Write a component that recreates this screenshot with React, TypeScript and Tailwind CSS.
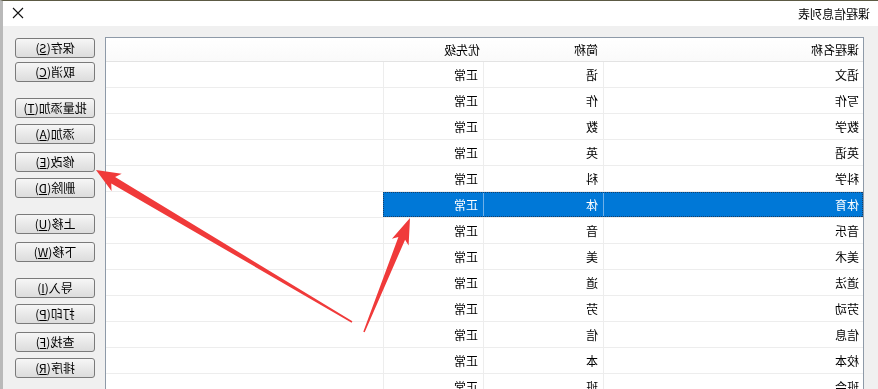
const COURSES = [
  ["语文", "语"],
  ["写作", "作"],
  ["数学", "数"],
  ["英语", "英"],
  ["科学", "科"],
  ["体育", "体"],
  ["音乐", "音"],
  ["美术", "美"],
  ["道法", "道"],
  ["劳动", "劳"],
  ["信息", "信"],
  ["校本", "本"],
  ["班会", "班"],
];

const SELECTED = 5;

// label, accelerator key, top margin before the button
const BUTTONS: [string, string, number][] = [
  ["保存", "S", 0],
  ["取消", "C", 4],
  ["批量添加", "T", 16],
  ["添加", "A", 6],
  ["修改", "E", 8],
  ["删除", "D", 6],
  ["上移", "U", 16],
  ["下移", "W", 8],
  ["导入", "I", 16],
  ["打印", "P", 6],
  ["查找", "F", 8],
  ["排序", "R", 6],
];

function arrowPoints(
  tx: number,
  ty: number,
  px: number,
  py: number,
  headLen: number,
  headHalf: number,
  tailHalf: number,
  neckHalf: number
) {
  const dx = px - tx;
  const dy = py - ty;
  const len = Math.hypot(dx, dy);
  const ux = dx / len;
  const uy = dy / len;
  const nx = -uy;
  const ny = ux;
  const bx = px - ux * headLen;
  const by = py - uy * headLen;
  const barbX = px - ux * (headLen + 4);
  const barbY = py - uy * (headLen + 4);
  const pts = [
    [tx + nx * tailHalf, ty + ny * tailHalf],
    [bx + nx * neckHalf, by + ny * neckHalf],
    [barbX + nx * headHalf, barbY + ny * headHalf],
    [px, py],
    [barbX - nx * headHalf, barbY - ny * headHalf],
    [bx - nx * neckHalf, by - ny * neckHalf],
    [tx - nx * tailHalf, ty - ny * tailHalf],
  ];
  return pts.map((p) => p.map((v) => v.toFixed(1)).join(",")).join(" ");
}

export default function App() {
  return (
    <div className="relative w-[878px] h-[389px] overflow-hidden bg-[#f0f0f0] font-['Noto_Sans_CJK_SC',sans-serif] text-[12px] text-black">
      {/* the whole window is shown mirrored */}
      <div className="-scale-x-100 w-full h-full flex flex-col border-t border-t-[#5c5a44] border-r-[3px] border-r-[#b9b9b9]">
        {/* Title bar */}
        <div className="h-[25px] shrink-0 bg-white flex items-center justify-between pl-[8px] pr-[9px]">
          <span className="leading-none">课程信息列表</span>
          <svg width="12" height="12" viewBox="0 0 12 12" className="mt-[-1px]">
            <path d="M1 1 L11 11 M11 1 L1 11" stroke="#111" strokeWidth="1.1" />
          </svg>
        </div>

        {/* Body */}
        <div className="flex-1 flex gap-[10px] pt-[11px] pl-[14px] pr-[12px] min-h-0">
          {/* List */}
          <div className="w-[759px] border border-b-0 border-[#8e9aa8] bg-white flex flex-col overflow-hidden">
            <div className="h-[24px] shrink-0 flex items-center border-b border-[#e3e3e3] bg-gradient-to-b from-white to-[#fafafa]">
              <div className="w-[260px] pl-[4px]">课程名称</div>
              <div className="w-[120px] pl-[5px]">简称</div>
              <div className="w-[100px] pl-[3px]">优先级</div>
            </div>
            {COURSES.map(([name, abbr], i) => {
              const sel = i === SELECTED;
              return (
                <div
                  key={name}
                  className="h-[26px] shrink-0 flex border-b border-[#ededed]"
                >
                  <div
                    className={
                      sel
                        ? "flex bg-[#0078d7] text-white outline outline-1 outline-dotted outline-[#1b3f66] -outline-offset-1"
                        : "flex"
                    }
                  >
                    <div
                      className={
                        "w-[260px] pl-[4px] flex items-center border-r " +
                        (sel ? "border-[#6fb0e8]" : "border-[#ededed]")
                      }
                    >
                      {name}
                    </div>
                    <div
                      className={
                        "w-[120px] pl-[5px] flex items-center border-r " +
                        (sel ? "border-[#6fb0e8]" : "border-[#ededed]")
                      }
                    >
                      {abbr}
                    </div>
                    <div
                      className={
                        "w-[100px] pl-[5px] flex items-center border-r " +
                        (sel ? "border-transparent" : "border-[#ededed]")
                      }
                    >
                      正常
                    </div>
                  </div>
                  <div className="flex-1" />
                </div>
              );
            })}
          </div>

          {/* Buttons */}
          <div className="w-[80px] flex flex-col pt-[1px]">
            {BUTTONS.map(([label, key, mt]) => (
              <div
                key={label}
                style={{ marginTop: mt }}
                className="h-[20px] shrink-0 flex items-center justify-center rounded-[3px] border border-[#7a7a7a] bg-gradient-to-b from-[#f6f6f6] to-[#dcdcdc] leading-none"
              >
                {label}(<span className="underline underline-offset-1">{key}</span>)
              </div>
            ))}
          </div>
        </div>
      </div>

      {/* annotation arrows, in picture coordinates */}
      <svg
        className="absolute inset-0 pointer-events-none"
        width="878"
        height="389"
        viewBox="0 0 878 389"
      >
        <polygon
          points={arrowPoints(352, 322, 96, 170, 20, 10, 0.8, 3.8)}
          fill="#f03a3a"
        />
        <polygon
          points={arrowPoints(364, 332, 410, 218, 22, 9, 0.8, 3.6)}
          fill="#f03a3a"
        />
      </svg>
    </div>
  );
}
